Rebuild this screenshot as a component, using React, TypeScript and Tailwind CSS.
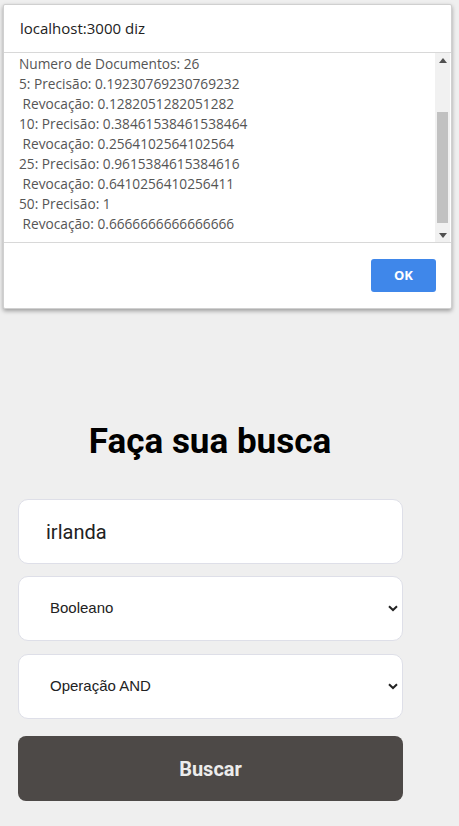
import React from "react";

const lines = [
  "Numero de Documentos: 26",
  "5: Precisão: 0.19230769230769232",
  " Revocação: 0.1282051282051282",
  "10: Precisão: 0.38461538461538464",
  " Revocação: 0.2564102564102564",
  "25: Precisão: 0.9615384615384616",
  " Revocação: 0.6410256410256411",
  "50: Precisão: 1",
  " Revocação: 0.6666666666666666",
];

function Chevron() {
  return (
    <svg width="10" height="7" viewBox="0 0 10 7" className="shrink-0">
      <path d="M1 1.2 L5 5 L9 1.2" fill="none" stroke="#222" strokeWidth="2" />
    </svg>
  );
}

export default function App() {
  return (
    <div className="relative min-h-[826px] bg-[#efefef] font-['Roboto',sans-serif]">
      <div className="w-[385px] ml-[18px] pt-[420px] flex flex-col">
        <h1 className="text-center text-[35px] font-bold leading-[44px] text-black mr-[1px]">Faça sua busca</h1>
        <div className="mt-[35px] h-[65px] rounded-[10px] border border-[#dedfe8] bg-white flex items-center pl-[27px] text-[20px] text-[#222]">
          irlanda
        </div>
        <div className="mt-[12px] h-[65px] rounded-[10px] border border-[#dedfe8] bg-white flex items-center justify-between pl-[31px] pr-[4px] font-['Liberation_Sans',sans-serif] text-[15px] text-[#222]">
          <span>Booleano</span>
          <Chevron />
        </div>
        <div className="mt-[13px] h-[65px] rounded-[10px] border border-[#dedfe8] bg-white flex items-center justify-between pl-[31px] pr-[4px] font-['Liberation_Sans',sans-serif] text-[15px] text-[#222]">
          <span>Operação AND</span>
          <Chevron />
        </div>
        <div className="mt-[17px] h-[65px] rounded-[8px] bg-[#4d4947] flex items-center justify-center text-[20px] font-bold text-[#ececec]">
          Buscar
        </div>
      </div>

      <div className="absolute left-[3px] top-[4px] w-[449px] h-[305px] bg-white border border-[#d0d0d0] shadow-[0_2px_4px_rgba(0,0,0,0.35)] rounded-[2px] flex flex-col font-['Open_Sans',sans-serif]">
        <div className="h-[48px] flex items-center pl-[16px] text-[15px] text-[#222] border-b border-[#d8d8d8]">
          localhost:3000 diz
        </div>
        <div className="h-[190px] flex border-b border-[#d8d8d8]">
          <div className="flex-1 pl-[15px] pt-[1px] text-[13.7px] leading-[20px] text-[#555] whitespace-pre">
            {lines.map((l, i) => (
              <div key={i}>{l}</div>
            ))}
          </div>
          <div className="w-[15px] bg-[#f1f1f1] flex flex-col items-center mr-[1px]">
            <div className="h-[14px] flex items-center justify-center">
              <svg width="8" height="5" viewBox="0 0 8 5"><path d="M0 5 L4 0 L8 5 Z" fill="#505050" /></svg>
            </div>
            <div className="mt-[45px] w-[11px] h-[111px] bg-[#c1c1c1]" />
            <div className="flex-1" />
            <div className="h-[14px] flex items-center justify-center">
              <svg width="8" height="5" viewBox="0 0 8 5"><path d="M0 0 L4 5 L8 0 Z" fill="#505050" /></svg>
            </div>
          </div>
        </div>
        <div className="flex-1 flex justify-end items-start pt-[16px] pr-[15px]">
          <div className="w-[65px] h-[33px] rounded-[3px] bg-[#3f87ea] flex items-center justify-center text-white text-[13px] font-bold">
            OK
          </div>
        </div>
      </div>
    </div>
  );
}
